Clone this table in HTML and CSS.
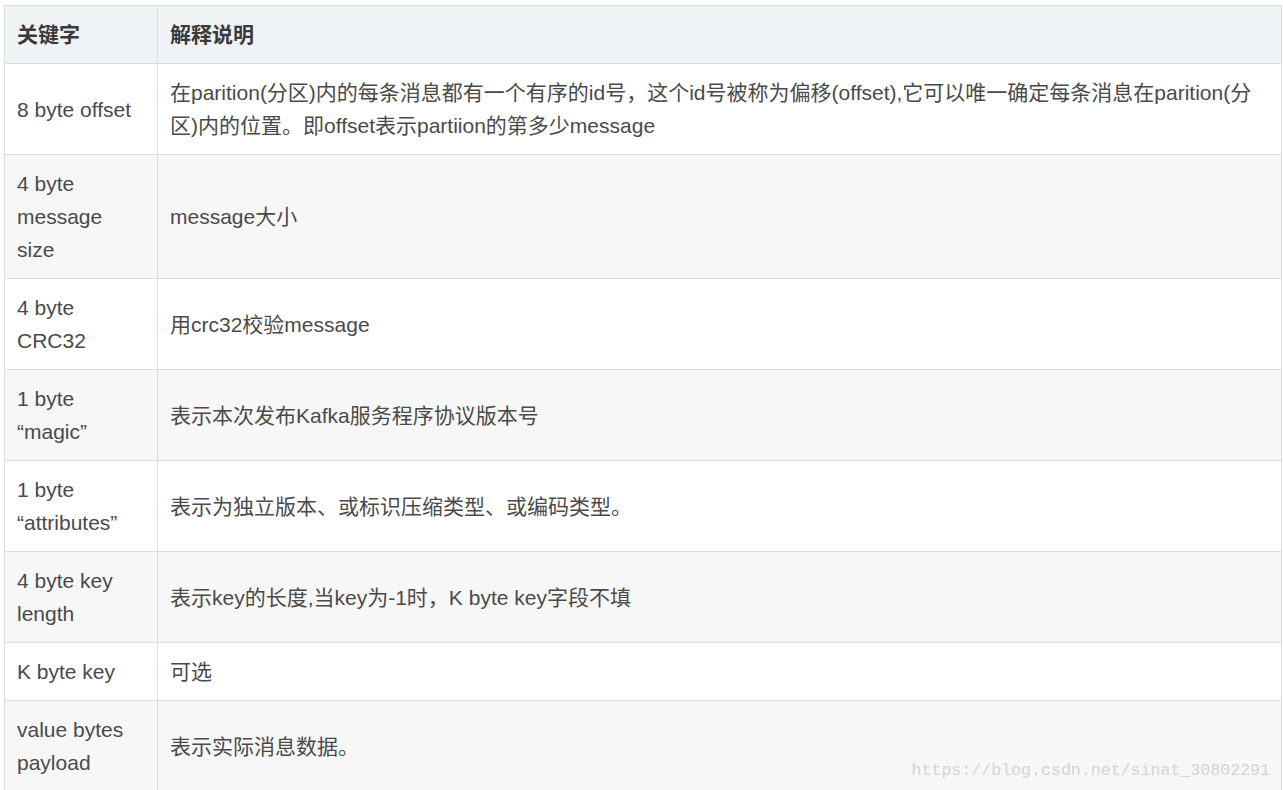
FILE: index.html
```html
<!DOCTYPE html>
<html lang="zh">
<head>
<meta charset="utf-8">
<link rel="stylesheet" href="styles.css">
</head>
<body>
<div class="page">
<table class="spec">
<thead>
<tr><th class="key">关键字</th><th>解释说明</th></tr>
</thead>
<tbody>
<tr><td>8 byte offset</td><td>在parition(分区)内的每条消息都有一个有序的id号，这个id号被称为偏移(offset),它可以唯一确定每条消息在parition(分区)内的位置。即offset表示partiion的第多少message</td></tr>
<tr><td>4 byte<br>message<br>size</td><td>message大小</td></tr>
<tr><td>4 byte<br>CRC32</td><td>用crc32校验message</td></tr>
<tr><td>1 byte<br>“magic”</td><td>表示本次发布Kafka服务程序协议版本号</td></tr>
<tr><td>1 byte<br>“attributes”</td><td>表示为独立版本、或标识压缩类型、或编码类型。</td></tr>
<tr><td>4 byte key<br>length</td><td>表示key的长度,当key为-1时，K byte key字段不填</td></tr>
<tr><td>K byte key</td><td>可选</td></tr>
<tr><td>value bytes<br>payload</td><td>表示实际消息数据。</td></tr>
</tbody>
</table>
<div class="watermark">https://blog.csdn.net/sinat_30802291</div>
</div>
</body>
</html>
```
FILE: styles.css
```css
html, body {
  margin: 0;
  padding: 0;
  background: #ffffff;
}
.page {
  position: relative;
  padding: 5px 0 0 4px;
  height: 785px;
  overflow: hidden;
}
.spec {
  border-collapse: collapse;
  width: 1278px;
  font-family: "Liberation Sans", "Noto Sans CJK SC", sans-serif;
  font-size: 21px;
  line-height: 33px;
  color: #4a4a4a;
}
.spec th, .spec td {
  border: 1px solid #dddddd;
  padding: 12px 12px;
  text-align: left;
  vertical-align: middle;
}
.spec th {
  background: #eff3f5;
  font-weight: bold;
  color: #3a3a3a;
}
.spec td:first-child, .spec th.key {
  width: 128px;
}
.spec tbody tr:nth-child(even) td {
  background: #f7f7f7;
}
.spec tbody tr:nth-child(odd) td {
  background: #ffffff;
}
.watermark {
  position: absolute;
  right: 13px;
  bottom: 10px;
  font-family: "Liberation Mono", monospace;
  font-size: 16.6px;
  color: #d4d4d4;
  letter-spacing: 0;
}
```
